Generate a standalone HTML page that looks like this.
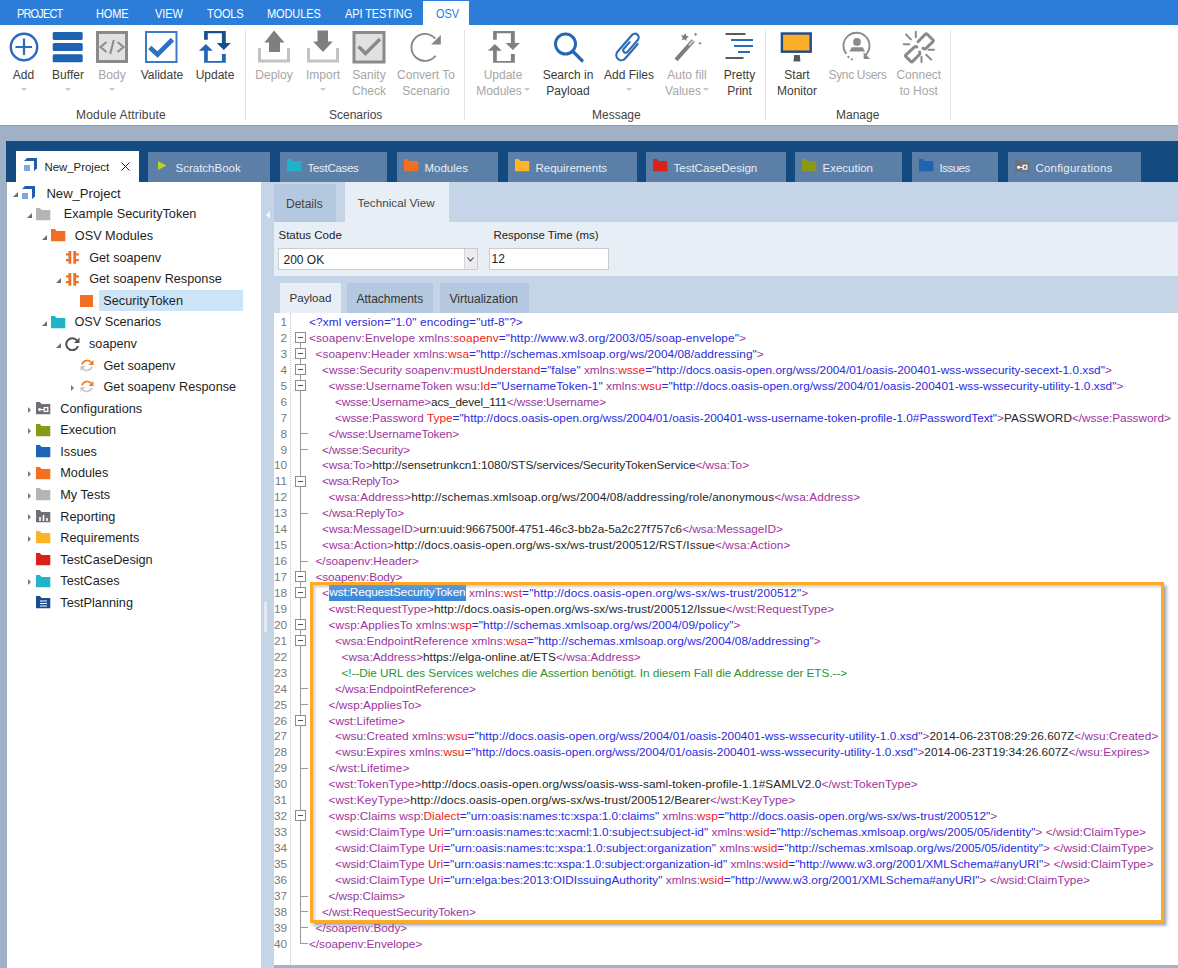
<!DOCTYPE html>
<html><head><meta charset="utf-8">
<style>
*{margin:0;padding:0;box-sizing:border-box}
html,body{width:1178px;height:968px;overflow:hidden}
body{position:relative;background:#a0b0c7;font-family:"Liberation Sans",sans-serif;color:#222}
.a{position:absolute}
.nw{white-space:nowrap}
/* menu */
#menu{left:0;top:0;width:1178px;height:25px;background:#2b7dd8}
.mi{position:absolute;top:6.6px;font-size:11px;color:#fff;white-space:nowrap;letter-spacing:-0.1px;transform:scaleY(1.12);transform-origin:0 0}
#osvtab{left:423px;top:1px;width:46px;height:24px;background:#fff}
/* ribbon */
#ribbon{left:0;top:25px;width:1178px;height:100px;background:#fff}
.lbl{position:absolute;font-size:12px;white-space:nowrap;color:#3c3c3c;text-align:center;line-height:16px}
.dis{color:#a6a6a6}
.grp{position:absolute;font-size:12px;color:#444;white-space:nowrap;top:98px}
.sep{position:absolute;top:30px;width:1px;height:90px;background:#e2e2e2}
.dd{position:absolute;width:0;height:0;border-left:3px solid transparent;border-right:3px solid transparent;border-top:3px solid #b9c9df}
/* tabs */
#tabbar{left:6px;top:141px;width:1172px;height:41px;background:#154a80}
.tab{position:absolute;top:152px;height:30px;background:#5b7fa7;color:#e8eef6;font-size:11.5px;white-space:nowrap}
.tab span{position:absolute;top:8px}
.tab i{position:absolute;display:block}
/* tree */
#tree{left:7px;top:182px;width:254px;height:786px;background:#fff}
.tr{position:absolute;font-size:12.7px;color:#1e1e1e;white-space:nowrap}
.ex{position:absolute;width:0;height:0}
.exd{border-left:5px solid transparent;border-bottom:5px solid #6e6e6e}
.exr{border-top:3.5px solid transparent;border-bottom:3.5px solid transparent;border-left:3.5px solid #7a7a7a}
/* right panel */
#split{left:261px;top:182px;width:13px;height:786px;background:#c5d4e6}
#rp{left:274px;top:182px;width:904px;height:786px;background:#c5d4e6}
.st{position:absolute;background:#b4c8df;font-size:12px;color:#454545;white-space:nowrap}
.st span{position:absolute}
#editor{left:274px;top:313px;width:904px;height:652px;background:#fff}
.ln{position:absolute;font-size:11.8px;white-space:pre;color:#262626;line-height:16px}
.ln b{font-weight:normal}
.sel{display:inline-block;color:#fff;background:linear-gradient(#5b9ae0,#3686d7);letter-spacing:-0.117px;height:15.5px;line-height:15px;vertical-align:top;margin-top:0.5px;padding-left:0.3px}
.t{color:#9c349c}
.r{color:#ee2222}
.v{color:#2a2ae0}
.c{color:#2f932f}
.no{position:absolute;left:274px;width:13px;text-align:right;font-size:11.8px;color:#7a7a7a;line-height:16px}
.fb{position:absolute;left:295px;width:10.5px;height:10.5px;border:1px solid #8e8e8e;background:#fff}
.fb:after{content:"";position:absolute;left:2px;top:3.8px;width:4.5px;height:1.4px;background:#555}
.ft{position:absolute;left:299.5px;width:8px;height:1px;background:#9a9a9a}
.fv{position:absolute;left:299.5px;width:1px;background:#9a9a9a}
</style></head><body>

<!-- menu bar -->
<div id="menu" class="a"></div>
<div id="osvtab" class="a"></div>
<div class="mi" style="left:17px;letter-spacing:-0.85px">PROJECT</div>
<div class="mi" style="left:96px">HOME</div>
<div class="mi" style="left:155px">VIEW</div>
<div class="mi" style="left:207px">TOOLS</div>
<div class="mi" style="left:267px">MODULES</div>
<div class="mi" style="left:345px">API TESTING</div>
<div class="mi" style="left:436px;color:#2b7dd8">OSV</div>

<!-- ribbon -->
<div id="ribbon" class="a"></div>
<div class="a" style="left:0;top:125px;width:1178px;height:1px;background:#8e9cae"></div>
<svg class="a" style="left:9px;top:32px" width="30" height="30" viewBox="0 0 30 30"><circle cx="15" cy="15" r="13.2" fill="none" stroke="#2a6cb8" stroke-width="2.4"/><path d="M6.5 15H23M15 6.5V23" stroke="#2a6cb8" stroke-width="2.2"/></svg>
<div class="lbl" style="left:-16.5px;top:67px;width:80px">Add</div>
<div class="dd" style="left:20.5px;top:88px"></div>
<svg class="a" style="left:52px;top:31px" width="32" height="32" viewBox="0 0 32 32"><rect x="0.7" y="1" width="30" height="8" rx="1.5" fill="#1f62b0"/><rect x="0.7" y="12" width="30" height="8" rx="1.5" fill="#1f62b0"/><rect x="0.7" y="23.2" width="30" height="8" rx="1.5" fill="#1f62b0"/></svg>
<div class="lbl" style="left:28px;top:67px;width:80px">Buffer</div>
<div class="dd" style="left:65px;top:88px"></div>
<svg class="a" style="left:96px;top:31px" width="32" height="32" viewBox="0 0 32 32"><rect x="1.5" y="1.5" width="29" height="29" fill="#e1e1e1" stroke="#8a8a8a" stroke-width="3"/><path d="M10.5 11L4.5 16L10.5 21M21.5 11L27.5 16L21.5 21M17.8 9L14.2 23" fill="none" stroke="#8e8e8e" stroke-width="2.1"/></svg>
<div class="lbl dis" style="left:72px;top:67px;width:80px">Body</div>
<div class="dd" style="left:109px;top:88px"></div>
<svg class="a" style="left:145px;top:31px" width="33" height="32" viewBox="0 0 33 32"><rect x="1" y="1" width="30.5" height="30" fill="#fff" stroke="#3a7bc8" stroke-width="2"/><path d="M4.8 16.5L12.5 23.5L27.5 8.5" fill="none" stroke="#2f72c0" stroke-width="4.6"/></svg>
<div class="lbl" style="left:122px;top:67px;width:80px">Validate</div>
<svg class="a" style="left:198px;top:31px" width="34" height="33" viewBox="0 0 34 33"><path d="M6.1 8.8V0.1H27.8V12.1H32.9L25.8 19.1L18.7 12.1H23.9V2.2H9.8V8.8Z" fill="#1a4f8e"/><path d="M27.8 23.1V31.7H6.1V19.8H0.9L7.9 12.9L14.8 19.8H9.8V29.9H23.9V23.1Z" fill="#2266b5"/></svg>
<div class="lbl" style="left:175px;top:67px;width:80px">Update</div>
<div class="grp" style="left:76px;top:108px;letter-spacing:0.2px">Module Attribute</div>
<div class="sep" style="left:245px"></div>
<svg class="a" style="left:257px;top:30px" width="34" height="34" viewBox="0 0 34 34"><path d="M2.5 18V31H31.5V18" fill="none" stroke="#c3c3c3" stroke-width="3"/><path d="M17 0.5L27.5 12.5H23V22H12V12.5H7.5Z" fill="#7f7f7f"/></svg>
<div class="lbl dis" style="left:234px;top:67px;width:80px">Deploy</div>
<svg class="a" style="left:306px;top:30px" width="34" height="34" viewBox="0 0 34 34"><path d="M2.5 18V31H31.5V18" fill="none" stroke="#c3c3c3" stroke-width="3"/><path d="M11.5 0.5H22V11.5H26.8L17 22L7 11.5H11.5Z" fill="#7f7f7f"/></svg>
<div class="lbl dis" style="left:283px;top:67px;width:80px">Import</div>
<div class="dd" style="left:320px;top:88px"></div>
<svg class="a" style="left:352px;top:31px" width="34" height="33" viewBox="0 0 34 33"><rect x="2" y="1.5" width="30" height="29.5" fill="#e1e1e1" stroke="#8a8a8a" stroke-width="3"/><path d="M6.5 15.5L13.5 22.5L28 8" fill="none" stroke="#8a8a8a" stroke-width="3.5"/></svg>
<div class="lbl dis" style="left:329px;top:67px;width:80px">Sanity</div>
<div class="lbl dis" style="left:329px;top:83px;width:80px">Check</div>
<svg class="a" style="left:409px;top:31px" width="34" height="33" viewBox="0 0 34 33"><path d="M26.6 24.7A13.5 13.5 0 1 1 26.2 7.6" fill="none" stroke="#858585" stroke-width="1.8"/><path d="M31.8 4.1V13.6H22.2Z" fill="#858585"/></svg>
<div class="lbl dis" style="left:386px;top:67px;width:80px">Convert To</div>
<div class="lbl dis" style="left:386px;top:83px;width:80px">Scenario</div>
<div class="grp" style="left:329px;top:108px">Scenarios</div>
<div class="sep" style="left:464px"></div>
<svg class="a" style="left:486.8px;top:31.2px" width="34" height="33" viewBox="0 0 34 33"><path d="M6.1 8.8V0.1H27.8V12.1H32.9L25.8 19.1L18.7 12.1H23.9V2.2H9.8V8.8Z" fill="#808080"/><path d="M27.8 23.1V31.7H6.1V19.8H0.9L7.9 12.9L14.8 19.8H9.8V29.9H23.9V23.1Z" fill="#808080"/></svg>
<div class="lbl dis" style="left:463px;top:67px;width:80px">Update</div>
<div class="lbl dis" style="left:459px;top:83px;width:80px">Modules</div>
<div class="dd" style="left:524px;top:88px"></div>
<svg class="a" style="left:552px;top:32px" width="33" height="31" viewBox="0 0 33 31"><circle cx="13.5" cy="12" r="10" fill="none" stroke="#2568b5" stroke-width="3"/><path d="M21 19.5L30 28.5" stroke="#2568b5" stroke-width="3.2" stroke-linecap="round"/></svg>
<div class="lbl" style="left:528px;top:67px;width:80px">Search in</div>
<div class="lbl" style="left:528px;top:83px;width:80px">Payload</div>
<svg class="a" style="left:613px;top:32px" width="30" height="31" viewBox="0 0 30 31"><path transform="translate(15.2 15.2) rotate(40.9) translate(-5.1 -15.55)" d="M10.2 6.9V26A5.1 5.1 0 0 1 0 26V3.8A3.8 3.8 0 0 1 7.6 3.8V19.6A2.4 2.4 0 0 1 2.8 19.6V10.8" fill="none" stroke="#2a6cb8" stroke-width="2.1" stroke-linecap="round"/></svg>
<div class="lbl" style="left:589px;top:67px;width:80px">Add Files</div>
<div class="dd" style="left:625.5px;top:88px"></div>
<svg class="a" style="left:673px;top:30px" width="32" height="33" viewBox="0 0 32 33"><path d="M3 29.8L20.2 10.6" stroke="#7d7d7d" stroke-width="4" stroke-linecap="butt"/><path d="M15.8 15.5L20 10.8" stroke="#dcdcdc" stroke-width="1.7"/><path d="M12.45 2.97 L13.14 5.81 L15.96 6.60 L13.47 8.14 L13.58 11.06 L11.35 9.17 L8.61 10.19 L9.72 7.48 L7.90 5.18 L10.82 5.40Z" fill="#7d7d7d"/><path d="M22.70 2.40 L23.27 3.83 L24.70 4.40 L23.27 4.97 L22.70 6.40 L22.13 4.97 L20.70 4.40 L22.13 3.83Z" fill="#7d7d7d"/><path d="M27.00 11.30 L27.57 12.73 L29.00 13.30 L27.57 13.87 L27.00 15.30 L26.43 13.87 L25.00 13.30 L26.43 12.73Z" fill="#7d7d7d"/></svg>
<div class="lbl dis" style="left:647px;top:67px;width:80px">Auto fill</div>
<div class="lbl dis" style="left:643px;top:83px;width:80px">Values</div>
<div class="dd" style="left:703px;top:88px"></div>
<svg class="a" style="left:724px;top:31px" width="31" height="30" viewBox="0 0 31 30"><path d="M1.5 3H21.5" stroke="#5a5a5a" stroke-width="2"/><path d="M7 9H29" stroke="#2a6cb8" stroke-width="2"/><path d="M10 15H29" stroke="#2a6cb8" stroke-width="2"/><path d="M14 21H26" stroke="#2a6cb8" stroke-width="2"/><path d="M1.5 27H19.5" stroke="#5a5a5a" stroke-width="2"/></svg>
<div class="lbl" style="left:699.5px;top:67px;width:80px">Pretty</div>
<div class="lbl" style="left:699.5px;top:83px;width:80px">Print</div>
<div class="grp" style="left:592px;top:108px">Message</div>
<div class="sep" style="left:765px"></div>
<svg class="a" style="left:780px;top:32px" width="33" height="31" viewBox="0 0 33 31"><rect x="1.9" y="1.5" width="28.8" height="18.2" fill="#fdae28" stroke="#1d4b8c" stroke-width="2.4"/><path d="M14.1 23.1H19.8L20.4 29.6H13.5Z" fill="#56595e"/></svg>
<div class="lbl" style="left:757px;top:67px;width:80px">Start</div>
<div class="lbl" style="left:757px;top:83px;width:80px">Monitor</div>
<svg class="a" style="left:841px;top:31px" width="33" height="32" viewBox="0 0 33 32"><path d="M5.35 22.86A13 13 0 1 1 24.6 24" fill="none" stroke="#8a8a8a" stroke-width="1.9"/><path d="M22.6 21.3V27.9H29.2Z" fill="#8a8a8a"/><circle cx="7.4" cy="26" r="1.15" fill="#8a8a8a"/><circle cx="10.9" cy="28.3" r="1.15" fill="#8a8a8a"/><circle cx="16" cy="10.9" r="3.9" fill="#8a8a8a"/><path d="M8.3 20.6L10.7 16.2H21.7L24 20.6Z" fill="#8a8a8a"/></svg>
<div class="lbl dis" style="left:817.5px;top:67px;width:80px"><span style="letter-spacing:-0.35px">Sync Users</span></div>
<svg class="a" style="left:902px;top:30px" width="34" height="34" viewBox="0 0 34 34"><path d="M16 11.8L23.3 4.3Q24.2 3.3 25.2 4.3L30.8 9.8Q31.8 10.8 30.8 11.8L23.5 18.6Q22.5 19.3 21 18.2" fill="none" stroke="#8a8a8a" stroke-width="3" stroke-linecap="round" stroke-linejoin="round"/><path d="M14.8 16.9Q13.6 16.2 12.3 17.2L4 24.8Q3 25.8 4 26.8L8.7 31.4Q9.7 32.4 10.7 31.4L17.2 24.7Q18.2 23.5 17.7 22" fill="none" stroke="#8a8a8a" stroke-width="3" stroke-linecap="round" stroke-linejoin="round"/><path d="M4 4.5L8.9 9.4M13.8 1.7V7.2M1.7 14.3H7.2M26.4 19.8H32M24.2 24.7L29.2 29.6M19.5 26.8V32" stroke="#8a8a8a" stroke-width="2" stroke-linecap="round"/></svg>
<div class="lbl dis" style="left:878.8px;top:67px;width:80px">Connect</div>
<div class="lbl dis" style="left:878.8px;top:83px;width:80px">to Host</div>
<div class="grp" style="left:836px;top:108px">Manage</div>
<div class="sep" style="left:950px"></div>

<!-- tab bar -->
<div id="tabbar" class="a"></div>
<div class="a" style="left:16px;top:151px;width:123px;height:31px;background:#fff"></div>
<svg class="a" style="left:24px;top:158px" width="13" height="13" viewBox="0 0 13 13"><path d="M3 0H13V10.5L10 13V3H0Z" fill="#1e5eaa"/><rect x="0" y="7" width="6" height="6" fill="#7aa9de"/></svg>
<div class="a nw" style="left:44.5px;top:160.5px;font-size:11.4px;color:#1e1e1e">New_Project</div>
<svg class="a" style="left:121px;top:162px" width="9" height="9" viewBox="0 0 9 9"><path d="M0.5 0.5L8.5 8.5M8.5 0.5L0.5 8.5" stroke="#222" stroke-width="1"/></svg>
<div class="tab" style="left:148px;width:122px"><span style="left:27.5px;top:10px;letter-spacing:0px">ScratchBook</span></div>
<svg class="a" style="left:158px;top:161px" width="9" height="9" viewBox="0 0 9 9"><path d="M0 0L8.5 4.5L0 9Z" fill="#b5d31f"/></svg>
<div class="tab" style="left:280px;width:107px"><span style="left:27.5px;top:10px;letter-spacing:-0.3px">TestCases</span></div>
<svg class="a" style="left:287px;top:159px" width="15" height="13" viewBox="0 0 15 13"><path d="M0 0H3.8L5.6 2H14.3V12.3H0Z" fill="#20b3c8"/></svg>
<div class="tab" style="left:397px;width:101px"><span style="left:27.5px;top:10px;letter-spacing:0px">Modules</span></div>
<svg class="a" style="left:404px;top:159px" width="15" height="13" viewBox="0 0 15 13"><path d="M0 0H3.8L5.6 2H14.3V12.3H0Z" fill="#f26f21"/></svg>
<div class="tab" style="left:508px;width:129px"><span style="left:27.5px;top:10px;letter-spacing:0px">Requirements</span></div>
<svg class="a" style="left:515px;top:159px" width="15" height="13" viewBox="0 0 15 13"><path d="M0 0H3.8L5.6 2H14.3V12.3H0Z" fill="#fdb32a"/></svg>
<div class="tab" style="left:646px;width:140px"><span style="left:27.5px;top:10px;letter-spacing:0px">TestCaseDesign</span></div>
<svg class="a" style="left:653px;top:159px" width="15" height="13" viewBox="0 0 15 13"><path d="M0 0H3.8L5.6 2H14.3V12.3H0Z" fill="#d9231a"/></svg>
<div class="tab" style="left:795px;width:107px"><span style="left:27.5px;top:10px;letter-spacing:0px">Execution</span></div>
<svg class="a" style="left:802px;top:159px" width="15" height="13" viewBox="0 0 15 13"><path d="M0 0H3.8L5.6 2H14.3V12.3H0Z" fill="#8a9a17"/></svg>
<div class="tab" style="left:912px;width:86px"><span style="left:27.5px;top:10px;letter-spacing:-0.5px">Issues</span></div>
<svg class="a" style="left:919px;top:159px" width="15" height="13" viewBox="0 0 15 13"><path d="M0 0H3.8L5.6 2H14.3V12.3H0Z" fill="#1f63b3"/></svg>
<div class="tab" style="left:1008px;width:133px"><span style="left:27.5px;top:10px;letter-spacing:0.2px">Configurations</span></div>
<svg class="a" style="left:1015px;top:159.5px" width="14.5" height="12.5" viewBox="0 0 14.5 12.5"><path d="M0 0H3.8L5.6 2H14.3V12.3H0Z" fill="#6e7277"/><circle cx="3.6" cy="7.3" r="1.5" fill="#fff"/><path d="M4.5 7.3H8" stroke="#fff" stroke-width="1"/><rect x="8.2" y="5.3" width="3.6" height="3.8" fill="none" stroke="#fff" stroke-width="1.2"/></svg>

<!-- tree -->
<div id="tree" class="a"></div>
<div class="ex exd" style="left:12.7px;top:191.7px"></div>
<svg class="a" style="left:21.5px;top:185.7px" width="13" height="13" viewBox="0 0 13 13"><path d="M3 0H13V10.5L10 13V3H0Z" fill="#1e5eaa"/><rect x="0" y="7" width="6" height="6" fill="#7aa9de"/></svg>
<div class="tr" style="left:46.4px;top:185.9px"><span style="font-size:13.1px">New_Project</span></div>
<div class="ex exd" style="left:27.2px;top:213.28px"></div>
<svg class="a" style="left:36px;top:207.78px" width="15" height="13" viewBox="0 0 15 13"><path d="M0 0H3.8L5.6 2H14.3V12.3H0Z" fill="#b3b5b7"/></svg>
<div class="tr" style="left:63.8px;top:207.48px">Example SecurityToken</div>
<div class="ex exd" style="left:41.7px;top:234.86px"></div>
<svg class="a" style="left:50.5px;top:229.36px" width="15" height="13" viewBox="0 0 15 13"><path d="M0 0H3.8L5.6 2H14.3V12.3H0Z" fill="#f26f21"/></svg>
<div class="tr" style="left:74.8px;top:229.06px">OSV Modules</div>
<svg class="a" style="left:65.5px;top:250.94px" width="13" height="13" viewBox="0 0 13 13"><path d="M2.5 0H5.3V12.7H2.5V10.2H0V8H2.5V4.4H0V2.2H2.5Z" fill="#f26f21"/><path d="M10.1 0H7.3V12.7H10.1V10.2H12.8V8H10.1V4.4H12.8V2.2H10.1Z" fill="#f26f21"/></svg>
<div class="tr" style="left:89.2px;top:250.64px">Get soapenv</div>
<div class="ex exd" style="left:56.2px;top:278.02px"></div>
<svg class="a" style="left:65.5px;top:272.52px" width="13" height="13" viewBox="0 0 13 13"><path d="M2.5 0H5.3V12.7H2.5V10.2H0V8H2.5V4.4H0V2.2H2.5Z" fill="#f26f21"/><path d="M10.1 0H7.3V12.7H10.1V10.2H12.8V8H10.1V4.4H12.8V2.2H10.1Z" fill="#f26f21"/></svg>
<div class="tr" style="left:89.2px;top:272.22px">Get soapenv Response</div>
<div class="a" style="left:99px;top:290.2px;width:144px;height:21.3px;background:#cce4f7"></div>
<svg class="a" style="left:80px;top:294.6px" width="12.7" height="12.6" viewBox="0 0 12.7 12.6"><rect width="13" height="12.5" fill="#f26f21"/></svg>
<div class="tr" style="left:103.3px;top:293.8px">SecurityToken</div>
<div class="ex exd" style="left:41.7px;top:321.18px"></div>
<svg class="a" style="left:50.5px;top:315.68px" width="15" height="13" viewBox="0 0 15 13"><path d="M0 0H3.8L5.6 2H14.3V12.3H0Z" fill="#21b4c8"/></svg>
<div class="tr" style="left:74.4px;top:315.38px">OSV Scenarios</div>
<div class="ex exd" style="left:56.2px;top:342.76px"></div>
<svg class="a" style="left:65px;top:336.76px" width="15" height="14" viewBox="0 0 15 14"><path d="M12 3.5A6 6 0 1 0 13 9" fill="none" stroke="#4c5054" stroke-width="2"/><path d="M14.5 0.5V6H9Z" fill="#4c5054"/></svg>
<div class="tr" style="left:89px;top:336.96px">soapenv</div>
<svg class="a" style="left:79.5px;top:358.84px" width="14" height="13" viewBox="0 0 14 13"><path d="M2 5.5A5.5 5.5 0 0 1 11.5 3.5" fill="none" stroke="#f47b20" stroke-width="1.6"/><path d="M13.5 1V6H8.5Z" fill="#f47b20"/><path d="M12 7.5A5.5 5.5 0 0 1 2.5 9.5" fill="none" stroke="#c8c8c8" stroke-width="1.6"/><path d="M0.5 12V7H5.5Z" fill="#c8c8c8"/></svg>
<div class="tr" style="left:103.5px;top:358.54px">Get soapenv</div>
<div class="ex exr" style="left:71.4px;top:384.92px"></div>
<svg class="a" style="left:79.5px;top:380.42px" width="14" height="13" viewBox="0 0 14 13"><path d="M2 5.5A5.5 5.5 0 0 1 11.5 3.5" fill="none" stroke="#f47b20" stroke-width="1.6"/><path d="M13.5 1V6H8.5Z" fill="#f47b20"/><path d="M12 7.5A5.5 5.5 0 0 1 2.5 9.5" fill="none" stroke="#c8c8c8" stroke-width="1.6"/><path d="M0.5 12V7H5.5Z" fill="#c8c8c8"/></svg>
<div class="tr" style="left:103.5px;top:380.12px">Get soapenv Response</div>
<div class="ex exr" style="left:27.9px;top:406.5px"></div>
<svg class="a" style="left:36px;top:402px" width="15" height="13" viewBox="0 0 15 13"><path d="M0 0H3.8L5.6 2H14.3V12.3H0Z" fill="#6e7277"/><circle cx="3.6" cy="7.6" r="1.5" fill="#fff"/><path d="M4.5 7.6H8" stroke="#fff" stroke-width="1"/><rect x="8.2" y="5.6" width="3.6" height="3.8" fill="none" stroke="#fff" stroke-width="1.2"/></svg>
<div class="tr" style="left:60.3px;top:401.7px">Configurations</div>
<div class="ex exr" style="left:27.9px;top:428.08px"></div>
<svg class="a" style="left:36px;top:423.58px" width="15" height="13" viewBox="0 0 15 13"><path d="M0 0H3.8L5.6 2H14.3V12.3H0Z" fill="#8a9a17"/></svg>
<div class="tr" style="left:60.3px;top:423.28px">Execution</div>
<svg class="a" style="left:36px;top:445.16px" width="15" height="13" viewBox="0 0 15 13"><path d="M0 0H3.8L5.6 2H14.3V12.3H0Z" fill="#1f63b3"/></svg>
<div class="tr" style="left:60.3px;top:444.86px">Issues</div>
<div class="ex exr" style="left:27.9px;top:471.24px"></div>
<svg class="a" style="left:36px;top:466.74px" width="15" height="13" viewBox="0 0 15 13"><path d="M0 0H3.8L5.6 2H14.3V12.3H0Z" fill="#f26f21"/></svg>
<div class="tr" style="left:60.3px;top:466.44px">Modules</div>
<div class="ex exr" style="left:27.9px;top:492.82px"></div>
<svg class="a" style="left:36px;top:488.32px" width="15" height="13" viewBox="0 0 15 13"><path d="M0 0H3.8L5.6 2H14.3V12.3H0Z" fill="#b3b5b7"/></svg>
<div class="tr" style="left:60.3px;top:488.02px">My Tests</div>
<div class="ex exr" style="left:27.9px;top:514.4px"></div>
<svg class="a" style="left:36px;top:509.9px" width="15" height="13" viewBox="0 0 15 13"><path d="M0 0H3.8L5.6 2H14.3V12.3H0Z" fill="#6e7277"/><path d="M4 11V7M7.5 11V5M11 11V8" stroke="#fff" stroke-width="1.6"/></svg>
<div class="tr" style="left:60.3px;top:509.6px">Reporting</div>
<div class="ex exr" style="left:27.9px;top:535.98px"></div>
<svg class="a" style="left:36px;top:531.48px" width="15" height="13" viewBox="0 0 15 13"><path d="M0 0H3.8L5.6 2H14.3V12.3H0Z" fill="#fdb32a"/></svg>
<div class="tr" style="left:60.3px;top:531.18px">Requirements</div>
<svg class="a" style="left:36px;top:553.06px" width="15" height="13" viewBox="0 0 15 13"><path d="M0 0H3.8L5.6 2H14.3V12.3H0Z" fill="#d9231a"/></svg>
<div class="tr" style="left:60.3px;top:552.76px">TestCaseDesign</div>
<div class="ex exr" style="left:27.9px;top:579.14px"></div>
<svg class="a" style="left:36px;top:574.64px" width="15" height="13" viewBox="0 0 15 13"><path d="M0 0H3.8L5.6 2H14.3V12.3H0Z" fill="#21b4c8"/></svg>
<div class="tr" style="left:60.3px;top:574.34px">TestCases</div>
<svg class="a" style="left:36px;top:596.22px" width="15" height="13" viewBox="0 0 15 13"><path d="M0 0H3.8L5.6 2H14.3V12.3H0Z" fill="#1a4b8c"/><path d="M4 5H11M4 7.5H11M4 10H11" stroke="#fff" stroke-width="1"/></svg>
<div class="tr" style="left:60.3px;top:595.92px">TestPlanning</div>

<!-- right panel -->
<div id="split" class="a"></div>
<div class="a" style="left:264px;top:602px;width:3px;height:30px;background:#e3eaf3"></div>
<div class="a" style="left:266px;top:211px;width:0;height:0;border-top:4px solid transparent;border-bottom:4px solid transparent;border-right:4px solid #f4f7fb"></div>
<div id="rp" class="a"></div>
<div class="st" style="left:274px;top:184px;width:62px;height:38px"><span style="left:12px;top:13px">Details</span></div>
<div class="st" style="left:345px;top:182px;width:104px;height:40px;background:#e8eef6"><span style="left:12.5px;top:14px;font-size:11.7px">Technical View</span></div>
<div class="a" style="left:274px;top:222px;width:904px;height:53.5px;background:#e8eef6"></div>
<div class="a nw" style="left:278.5px;top:229px;font-size:11.5px;color:#222">Status Code</div>
<div class="a nw" style="left:493.5px;top:229px;font-size:11.4px;color:#222">Response Time (ms)</div>
<div class="a" style="left:278px;top:248px;width:200px;height:22px;background:#fff;border:1px solid #c9cdd2"></div>
<div class="a" style="left:464px;top:249px;width:13px;height:20px;background:#ececec;border-left:1px solid #d6d6d6"></div>
<svg class="a" style="left:467px;top:257px" width="7" height="5" viewBox="0 0 7 5"><path d="M0.5 0.5L3.5 4L6.5 0.5" fill="none" stroke="#444" stroke-width="1.1"/></svg>
<div class="a nw" style="left:283.5px;top:252.5px;font-size:12px;color:#222">200 OK</div>
<div class="a" style="left:489px;top:248px;width:119.5px;height:22px;background:#fff;border:1px solid #c9cdd2"></div>
<div class="a nw" style="left:491.5px;top:251.5px;font-size:12px;color:#222">12</div>
<div class="st" style="left:279.5px;top:282.5px;width:61.5px;height:30.5px;background:#e8eef6"><span style="left:10px;top:8px;font-size:11.6px;color:#333">Payload</span></div>
<div class="st" style="left:347px;top:282.5px;width:86px;height:30.5px"><span style="left:9.5px;top:9px;color:#333">Attachments</span></div>
<div class="st" style="left:440px;top:282.5px;width:88.5px;height:30.5px"><span style="left:9.5px;top:9px;color:#333">Virtualization</span></div>
<div id="editor" class="a"></div>
<div class="a" style="left:290px;top:313px;width:1px;height:652px;border-left:1px dotted #c8c8c8"></div>
<div class="no" style="top:314.00px">1</div>
<div class="no" style="top:329.94px">2</div>
<div class="no" style="top:345.88px">3</div>
<div class="no" style="top:361.82px">4</div>
<div class="no" style="top:377.76px">5</div>
<div class="no" style="top:393.70px">6</div>
<div class="no" style="top:409.64px">7</div>
<div class="no" style="top:425.58px">8</div>
<div class="no" style="top:441.52px">9</div>
<div class="no" style="top:457.46px">10</div>
<div class="no" style="top:473.40px">11</div>
<div class="no" style="top:489.34px">12</div>
<div class="no" style="top:505.28px">13</div>
<div class="no" style="top:521.22px">14</div>
<div class="no" style="top:537.16px">15</div>
<div class="no" style="top:553.10px">16</div>
<div class="no" style="top:569.04px">17</div>
<div class="no" style="top:584.98px">18</div>
<div class="no" style="top:600.92px">19</div>
<div class="no" style="top:616.86px">20</div>
<div class="no" style="top:632.80px">21</div>
<div class="no" style="top:648.74px">22</div>
<div class="no" style="top:664.68px">23</div>
<div class="no" style="top:680.62px">24</div>
<div class="no" style="top:696.56px">25</div>
<div class="no" style="top:712.50px">26</div>
<div class="no" style="top:728.44px">27</div>
<div class="no" style="top:744.38px">28</div>
<div class="no" style="top:760.32px">29</div>
<div class="no" style="top:776.26px">30</div>
<div class="no" style="top:792.20px">31</div>
<div class="no" style="top:808.14px">32</div>
<div class="no" style="top:824.08px">33</div>
<div class="no" style="top:840.02px">34</div>
<div class="no" style="top:855.96px">35</div>
<div class="no" style="top:871.90px">36</div>
<div class="no" style="top:887.84px">37</div>
<div class="no" style="top:903.78px">38</div>
<div class="no" style="top:919.72px">39</div>
<div class="no" style="top:935.66px">40</div>
<div class="fv" style="top:335.94px;height:607.06px"></div>
<div class="fb" style="top:332.00px"></div>
<div class="fb" style="top:348.00px"></div>
<div class="fb" style="top:364.00px"></div>
<div class="fb" style="top:380.00px"></div>
<div class="fb" style="top:476.00px"></div>
<div class="fb" style="top:571.00px"></div>
<div class="fb" style="top:587.00px"></div>
<div class="fb" style="top:619.00px"></div>
<div class="fb" style="top:635.00px"></div>
<div class="fb" style="top:715.00px"></div>
<div class="fb" style="top:810.00px"></div>
<div class="ft" style="top:433.00px"></div>
<div class="ft" style="top:449.00px"></div>
<div class="ft" style="top:513.00px"></div>
<div class="ft" style="top:561.00px"></div>
<div class="ft" style="top:688.00px"></div>
<div class="ft" style="top:704.00px"></div>
<div class="ft" style="top:768.00px"></div>
<div class="ft" style="top:896.00px"></div>
<div class="ft" style="top:911.00px"></div>
<div class="ft" style="top:927.00px"></div>
<div class="ft" style="top:943.00px"></div>
<!-- orange box -->
<div class="a" style="left:310px;top:582px;width:854px;height:341px;border:3px solid #fdab27;box-shadow:2.5px 2.5px 3px rgba(70,70,90,0.5), inset 2px 2px 3px rgba(0,0,0,0.2)"></div>
<div class="ln" style="top:314.00px;left:309.0px;letter-spacing:0.149px"><b class="v">&lt;?xml version="1.0" encoding="utf-8"?&gt;</b></div>
<div class="ln" style="top:329.94px;left:309.0px;letter-spacing:0.125px"><b class="t">&lt;soapenv:Envelope</b><b class="t"> xmlns:</b><b class="r">soapenv</b><b class="v">="http://www.w3.org/2003/05/soap-envelope"</b><b class="t">&gt;</b></div>
<div class="ln" style="top:345.88px;left:315.5px;letter-spacing:0.070px"><b class="t">&lt;soapenv:Header</b><b class="t"> xmlns:</b><b class="r">wsa</b><b class="v">="http://schemas.xmlsoap.org/ws/2004/08/addressing"</b><b class="t">&gt;</b></div>
<div class="ln" style="top:361.82px;left:322.0px;letter-spacing:0.023px"><b class="t">&lt;wsse:Security</b><b class="t"> soapenv:</b><b class="r">mustUnderstand</b><b class="v">="false"</b><b class="t"> xmlns:</b><b class="r">wsse</b><b class="v">="http://docs.oasis-open.org/wss/2004/01/oasis-200401-wss-wssecurity-secext-1.0.xsd"</b><b class="t">&gt;</b></div>
<div class="ln" style="top:377.76px;left:328.5px;letter-spacing:0.050px"><b class="t">&lt;wsse:UsernameToken</b><b class="t"> wsu:</b><b class="r">Id</b><b class="v">="UsernameToken-1"</b><b class="t"> xmlns:</b><b class="r">wsu</b><b class="v">="http://docs.oasis-open.org/wss/2004/01/oasis-200401-wss-wssecurity-utility-1.0.xsd"</b><b class="t">&gt;</b></div>
<div class="ln" style="top:393.70px;left:335.0px;letter-spacing:-0.151px"><b class="t">&lt;wsse:Username</b><b class="t">&gt;</b>acs_devel_111<b class="t">&lt;/wsse:Username&gt;</b></div>
<div class="ln" style="top:409.64px;left:335.0px;letter-spacing:0.001px"><b class="t">&lt;wsse:Password</b> <b class="r">Type</b><b class="v">="http://docs.oasis-open.org/wss/2004/01/oasis-200401-wss-username-token-profile-1.0#PasswordText"</b><b class="t">&gt;</b>PASSWORD<b class="t">&lt;/wsse:Password&gt;</b></div>
<div class="ln" style="top:425.58px;left:328.5px;letter-spacing:-0.124px"><b class="t">&lt;/wsse:UsernameToken&gt;</b></div>
<div class="ln" style="top:441.52px;left:322.0px;letter-spacing:-0.108px"><b class="t">&lt;/wsse:Security&gt;</b></div>
<div class="ln" style="top:457.46px;left:322.0px;letter-spacing:-0.033px"><b class="t">&lt;wsa:To</b><b class="t">&gt;</b>http://sensetrunkcn1:1080/STS/services/SecurityTokenService<b class="t">&lt;/wsa:To&gt;</b></div>
<div class="ln" style="top:473.40px;left:322.0px;letter-spacing:-0.282px"><b class="t">&lt;wsa:ReplyTo</b><b class="t">&gt;</b></div>
<div class="ln" style="top:489.34px;left:328.5px;letter-spacing:0.109px"><b class="t">&lt;wsa:Address</b><b class="t">&gt;</b>http://schemas.xmlsoap.org/ws/2004/08/addressing/role/anonymous<b class="t">&lt;/wsa:Address&gt;</b></div>
<div class="ln" style="top:505.28px;left:322.0px;letter-spacing:-0.138px"><b class="t">&lt;/wsa:ReplyTo&gt;</b></div>
<div class="ln" style="top:521.22px;left:322.0px;letter-spacing:-0.010px"><b class="t">&lt;wsa:MessageID</b><b class="t">&gt;</b>urn:uuid:9667500f-4751-46c3-bb2a-5a2c27f757c6<b class="t">&lt;/wsa:MessageID&gt;</b></div>
<div class="ln" style="top:537.16px;left:322.0px;letter-spacing:0.106px"><b class="t">&lt;wsa:Action</b><b class="t">&gt;</b>http://docs.oasis-open.org/ws-sx/ws-trust/200512/RST/Issue<b class="t">&lt;/wsa:Action&gt;</b></div>
<div class="ln" style="top:553.10px;left:315.5px;letter-spacing:-0.019px"><b class="t">&lt;/soapenv:Header&gt;</b></div>
<div class="ln" style="top:569.04px;left:315.5px;letter-spacing:-0.126px"><b class="t">&lt;soapenv:Body</b><b class="t">&gt;</b></div>
<div class="ln" style="top:584.98px;left:322.0px;letter-spacing:0.149px"><b class="t">&lt;</b><b class="sel">wst:RequestSecurityToken</b><b class="t"> xmlns:</b><b class="r">wst</b><b class="v">="http://docs.oasis-open.org/ws-sx/ws-trust/200512"</b><b class="t">&gt;</b></div>
<div class="ln" style="top:600.92px;left:328.5px;letter-spacing:0.069px"><b class="t">&lt;wst:RequestType</b><b class="t">&gt;</b>http://docs.oasis-open.org/ws-sx/ws-trust/200512/Issue<b class="t">&lt;/wst:RequestType&gt;</b></div>
<div class="ln" style="top:616.86px;left:328.5px;letter-spacing:0.111px"><b class="t">&lt;wsp:AppliesTo</b><b class="t"> xmlns:</b><b class="r">wsp</b><b class="v">="http://schemas.xmlsoap.org/ws/2004/09/policy"</b><b class="t">&gt;</b></div>
<div class="ln" style="top:632.80px;left:335.0px;letter-spacing:0.050px"><b class="t">&lt;wsa:EndpointReference</b><b class="t"> xmlns:</b><b class="r">wsa</b><b class="v">="http://schemas.xmlsoap.org/ws/2004/08/addressing"</b><b class="t">&gt;</b></div>
<div class="ln" style="top:648.74px;left:341.5px;letter-spacing:0.017px"><b class="t">&lt;wsa:Address</b><b class="t">&gt;</b>https://elga-online.at/ETS<b class="t">&lt;/wsa:Address&gt;</b></div>
<div class="ln" style="top:664.68px;left:341.5px;letter-spacing:-0.056px"><b class="c">&lt;!--Die URL des Services welches die Assertion benötigt. In diesem Fall die Addresse der ETS.--&gt;</b></div>
<div class="ln" style="top:680.62px;left:335.0px;letter-spacing:-0.063px"><b class="t">&lt;/wsa:EndpointReference&gt;</b></div>
<div class="ln" style="top:696.56px;left:328.5px;letter-spacing:0.033px"><b class="t">&lt;/wsp:AppliesTo&gt;</b></div>
<div class="ln" style="top:712.50px;left:328.5px;letter-spacing:0.016px"><b class="t">&lt;wst:Lifetime</b><b class="t">&gt;</b></div>
<div class="ln" style="top:728.44px;left:335.0px;letter-spacing:0.050px"><b class="t">&lt;wsu:Created</b><b class="t"> xmlns:</b><b class="r">wsu</b><b class="v">="http://docs.oasis-open.org/wss/2004/01/oasis-200401-wss-wssecurity-utility-1.0.xsd"</b><b class="t">&gt;</b>2014-06-23T08:29:26.607Z<b class="t">&lt;/wsu:Created&gt;</b></div>
<div class="ln" style="top:744.38px;left:335.0px;letter-spacing:0.027px"><b class="t">&lt;wsu:Expires</b><b class="t"> xmlns:</b><b class="r">wsu</b><b class="v">="http://docs.oasis-open.org/wss/2004/01/oasis-200401-wss-wssecurity-utility-1.0.xsd"</b><b class="t">&gt;</b>2014-06-23T19:34:26.607Z<b class="t">&lt;/wsu:Expires&gt;</b></div>
<div class="ln" style="top:760.32px;left:328.5px;letter-spacing:0.104px"><b class="t">&lt;/wst:Lifetime&gt;</b></div>
<div class="ln" style="top:776.26px;left:328.5px;letter-spacing:0.077px"><b class="t">&lt;wst:TokenType</b><b class="t">&gt;</b>http://docs.oasis-open.org/wss/oasis-wss-saml-token-profile-1.1#SAMLV2.0<b class="t">&lt;/wst:TokenType&gt;</b></div>
<div class="ln" style="top:792.20px;left:328.5px;letter-spacing:0.086px"><b class="t">&lt;wst:KeyType</b><b class="t">&gt;</b>http://docs.oasis-open.org/ws-sx/ws-trust/200512/Bearer<b class="t">&lt;/wst:KeyType&gt;</b></div>
<div class="ln" style="top:808.14px;left:328.5px;letter-spacing:0.018px"><b class="t">&lt;wsp:Claims</b><b class="t"> wsp:</b><b class="r">Dialect</b><b class="v">="urn:oasis:names:tc:xspa:1.0:claims"</b><b class="t"> xmlns:</b><b class="r">wsp</b><b class="v">="http://docs.oasis-open.org/ws-sx/ws-trust/200512"</b><b class="t">&gt;</b></div>
<div class="ln" style="top:824.08px;left:335.0px;letter-spacing:0.041px"><b class="t">&lt;wsid:ClaimType</b> <b class="r">Uri</b><b class="v">="urn:oasis:names:tc:xacml:1.0:subject:subject-id"</b><b class="t"> xmlns:</b><b class="r">wsid</b><b class="v">="http://schemas.xmlsoap.org/ws/2005/05/identity"</b><b class="t">&gt;</b> <b class="t">&lt;/wsid:ClaimType&gt;</b></div>
<div class="ln" style="top:840.02px;left:335.0px;letter-spacing:0.038px"><b class="t">&lt;wsid:ClaimType</b> <b class="r">Uri</b><b class="v">="urn:oasis:names:tc:xspa:1.0:subject:organization"</b><b class="t"> xmlns:</b><b class="r">wsid</b><b class="v">="http://schemas.xmlsoap.org/ws/2005/05/identity"</b><b class="t">&gt;</b> <b class="t">&lt;/wsid:ClaimType&gt;</b></div>
<div class="ln" style="top:855.96px;left:335.0px;letter-spacing:0.011px"><b class="t">&lt;wsid:ClaimType</b> <b class="r">Uri</b><b class="v">="urn:oasis:names:tc:xspa:1.0:subject:organization-id"</b><b class="t"> xmlns:</b><b class="r">wsid</b><b class="v">="http://www.w3.org/2001/XMLSchema#anyURI"</b><b class="t">&gt;</b> <b class="t">&lt;/wsid:ClaimType&gt;</b></div>
<div class="ln" style="top:871.90px;left:335.0px;letter-spacing:0.029px"><b class="t">&lt;wsid:ClaimType</b> <b class="r">Uri</b><b class="v">="urn:elga:bes:2013:OIDIssuingAuthority"</b><b class="t"> xmlns:</b><b class="r">wsid</b><b class="v">="http://www.w3.org/2001/XMLSchema#anyURI"</b><b class="t">&gt;</b> <b class="t">&lt;/wsid:ClaimType&gt;</b></div>
<div class="ln" style="top:887.84px;left:328.5px;letter-spacing:-0.075px"><b class="t">&lt;/wsp:Claims&gt;</b></div>
<div class="ln" style="top:903.78px;left:322.0px;letter-spacing:-0.081px"><b class="t">&lt;/wst:RequestSecurityToken&gt;</b></div>
<div class="ln" style="top:919.72px;left:315.5px;letter-spacing:-0.010px"><b class="t">&lt;/soapenv:Body&gt;</b></div>
<div class="ln" style="top:935.66px;left:309.0px;letter-spacing:-0.049px"><b class="t">&lt;/soapenv:Envelope&gt;</b></div>
<div class="a" style="left:274px;top:965px;width:904px;height:3px;background:#a3b3c9"></div>
</body></html>
